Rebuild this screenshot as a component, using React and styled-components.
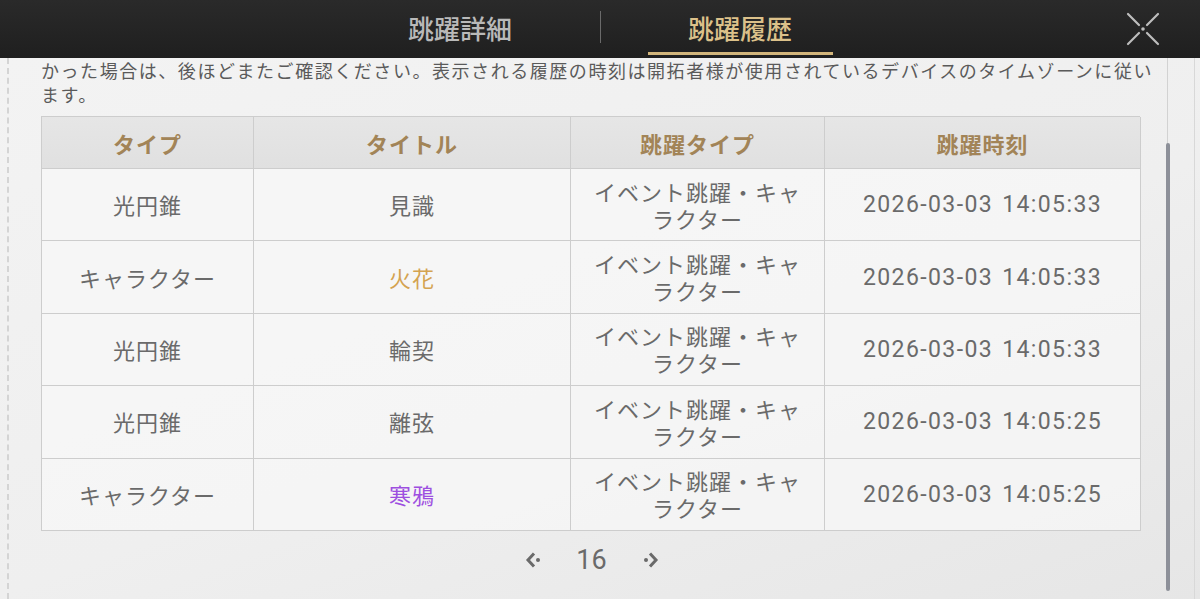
import React from "react";
import styled, { createGlobalStyle } from "styled-components";

const GlobalStyle = createGlobalStyle`
  html, body {
    margin: 0;
    padding: 0;
    background: #efefef;
  }
  * {
    box-sizing: border-box;
  }
`;

const jp = `"Noto Sans CJK JP", "Noto Sans", sans-serif`;

const Page = styled.div`
  width: 1200px;
  height: 599px;
  display: flex;
  flex-direction: column;
  overflow: hidden;
  font-family: ${jp};
`;

const Header = styled.div`
  height: 58px;
  flex: none;
  background: linear-gradient(180deg, #2a2a2a 0%, #1f1f1f 100%);
  display: grid;
  grid-template-columns: 1fr auto 1fr;
  align-items: stretch;
`;

const Tabs = styled.div`
  grid-column: 2;
  display: flex;
  align-items: center;
  gap: 47px;
`;

const Tab = styled.div`
  width: 185px;
  height: 100%;
  display: flex;
  align-items: center;
  justify-content: center;
  font-size: 26px;
  font-weight: 500;
  padding-top: 2px;
  color: ${(p) => (p.$active ? "#dcc18a" : "#b9b9b9")};
  border-bottom: 3px solid ${(p) => (p.$active ? "#d2b57b" : "transparent")};
  border-top: 3px solid transparent;
  margin-bottom: 6px;
`;

const Divider = styled.div`
  width: 1px;
  height: 32px;
  background: #6a6a6a;
  margin-bottom: 4px;
`;

const CloseCell = styled.div`
  grid-column: 3;
  display: flex;
  align-items: center;
  justify-content: flex-end;
  padding-right: 38px;
`;

const CloseButton = styled.button`
  width: 38px;
  height: 38px;
  padding: 0;
  border: none;
  background: none;
  display: flex;
  align-items: center;
  justify-content: center;
`;

const Body = styled.div`
  flex: 1;
  position: relative;
  overflow: hidden;
  background: linear-gradient(160deg, #f3f3f3 0%, #efefef 55%, #e6e6e6 100%);
  &::before {
    content: "";
    position: absolute;
    left: 7px;
    top: 0;
    bottom: 0;
    border-left: 2px dashed #d4d4d4;
  }
  &::after {
    content: "";
    position: absolute;
    right: 5px;
    top: 0;
    bottom: 0;
    border-left: 1px solid #d8d8d8;
  }
`;

const ScrollTrack = styled.div`
  position: absolute;
  left: 1167px;
  top: 0;
  width: 1px;
  height: 86px;
  background: #d2d2d2;
`;

const ScrollThumb = styled.div`
  position: absolute;
  left: 1166px;
  top: 85px;
  width: 4px;
  height: 448px;
  background: #8d9099;
  border-radius: 2px;
`;

const Content = styled.div`
  width: 1099px;
  margin-left: 41px;
  display: flex;
  flex-direction: column;
`;

const Notice = styled.p`
  margin: 0;
  font-size: 18px;
  line-height: 24px;
  letter-spacing: 1.55px;
  color: #5a5a5a;
  white-space: nowrap;
`;

const Table = styled.div`
  margin-top: 10px;
  display: grid;
  grid-template-columns: 212px 317px 254px 316px;
  grid-auto-rows: 72.4px;
  grid-template-rows: 52px;
  border-top: 1px solid #cdcdcd;
  border-left: 1px solid #cdcdcd;
`;

const HeadCell = styled.div`
  display: flex;
  align-items: center;
  justify-content: center;
  background: linear-gradient(180deg, #e6e6e6 0%, #e0e0e0 100%);
  border-right: 1px solid #cdcdcd;
  border-bottom: 1px solid #cdcdcd;
  font-size: 22px;
  font-weight: 700;
  letter-spacing: 1px;
  color: #a28457;
`;

const Cell = styled.div`
  display: flex;
  align-items: center;
  justify-content: center;
  text-align: center;
  padding: 0 16px;
  background: rgba(248, 248, 248, 0.7);
  border-right: 1px solid #cdcdcd;
  border-bottom: 1px solid #cdcdcd;
  font-size: 22px;
  line-height: 27px;
  letter-spacing: 1px;
  color: ${(p) => p.$color || "#6a6a6a"};
  font-family: ${(p) => (p.$mono ? `"Roboto", "DejaVu Sans", sans-serif` : jp)};
  ${(p) => p.$mono && "font-size: 23px; letter-spacing: 1.4px; word-spacing: 2px;"}
`;

const Pager = styled.div`
  height: 58px;
  display: flex;
  align-items: center;
  justify-content: center;
  gap: 30px;
  padding-left: 2px;
`;

const PageNum = styled.span`
  font-family: "Roboto", "DejaVu Sans", sans-serif;
  font-size: 27px;
  color: #6a6a6a;
  width: 36px;
  text-align: center;
`;

const ArrowButton = styled.button`
  border: none;
  background: none;
  padding: 0;
  width: 20px;
  height: 20px;
  display: flex;
  align-items: center;
  justify-content: center;
`;

const CloseIcon = () => (
  <svg width="36" height="36" viewBox="0 0 36 36">
    <g stroke="#bdbdbd" strokeWidth="2.2" strokeLinecap="round">
      <line x1="3" y1="3" x2="14" y2="14" />
      <line x1="33" y1="3" x2="22" y2="14" />
      <line x1="3" y1="33" x2="14" y2="22" />
      <line x1="33" y1="33" x2="22" y2="22" />
    </g>
    <circle cx="18" cy="18" r="1.8" fill="#bdbdbd" />
  </svg>
);

const Arrow = ({ right }) => (
  <svg
    width="20"
    height="20"
    viewBox="0 0 20 20"
    style={right ? { transform: "scaleX(-1)" } : undefined}
  >
    <polyline
      points="10,3.5 4,10 10,16.5"
      fill="none"
      stroke="#6a6a6a"
      strokeWidth="3"
      strokeLinejoin="miter"
    />
    <circle cx="14" cy="10" r="2" fill="#6a6a6a" />
  </svg>
);

const rows = [
  { type: "光円錐", title: "見識", time: "2026-03-03 14:05:33" },
  { type: "キャラクター", title: "火花", color: "#d4a350", time: "2026-03-03 14:05:33" },
  { type: "光円錐", title: "輪契", time: "2026-03-03 14:05:33" },
  { type: "光円錐", title: "離弦", time: "2026-03-03 14:05:25" },
  { type: "キャラクター", title: "寒鴉", color: "#9d4fe0", time: "2026-03-03 14:05:25" },
];

const App = () => {
  return (
    <Page>
      <GlobalStyle />
      <Header>
        <Tabs>
          <Tab>跳躍詳細</Tab>
          <Divider />
          <Tab $active>跳躍履歴</Tab>
        </Tabs>
        <CloseCell>
          <CloseButton aria-label="閉じる">
            <CloseIcon />
          </CloseButton>
        </CloseCell>
      </Header>
      <Body>
        <ScrollTrack />
        <ScrollThumb />
        <Content>
          <Notice>
            かった場合は、後ほどまたご確認ください。表示される履歴の時刻は開拓者様が使用されているデバイスのタイムゾーンに従い
            <br />
            ます。
          </Notice>
          <Table>
            <HeadCell>タイプ</HeadCell>
            <HeadCell>タイトル</HeadCell>
            <HeadCell>跳躍タイプ</HeadCell>
            <HeadCell>跳躍時刻</HeadCell>
            {rows.map((r, i) => (
              <React.Fragment key={i}>
                <Cell>{r.type}</Cell>
                <Cell $color={r.color}>{r.title}</Cell>
                <Cell>イベント跳躍・キャラクター</Cell>
                <Cell $mono>{r.time}</Cell>
              </React.Fragment>
            ))}
          </Table>
          <Pager>
            <ArrowButton aria-label="前へ">
              <Arrow />
            </ArrowButton>
            <PageNum>16</PageNum>
            <ArrowButton aria-label="次へ">
              <Arrow right />
            </ArrowButton>
          </Pager>
        </Content>
      </Body>
    </Page>
  );
};

export default App;
